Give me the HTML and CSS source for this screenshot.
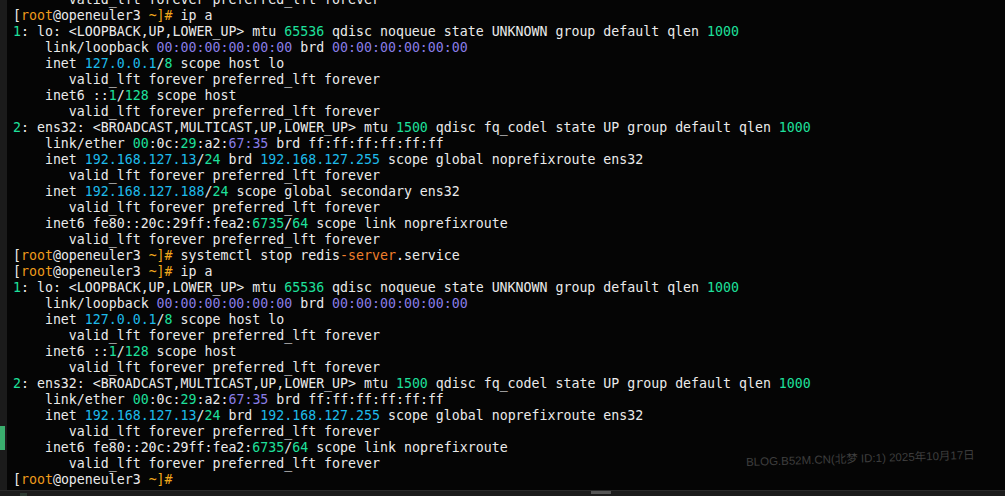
FILE: index.html
```html
<!DOCTYPE html>
<html>
<head>
<meta charset="utf-8">
<link rel="stylesheet" href="styles.css">
</head>
<body>
<div class="window">
  <div class="main">
    <div class="gutter"><div class="marker"></div></div>
    <div class="term">
      <div class="lines">
<div class="ln">       valid_lft forever preferred_lft forever</div>
<div class="ln">[<span class="o">root</span>@openeuler3 <span class="y">~]#</span> ip a</div>
<div class="ln"><span class="g">1</span>: lo: &lt;LOOPBACK,UP,LOWER_UP&gt; mtu <span class="g">65536</span> qdisc noqueue state UNKNOWN group default qlen <span class="g">1000</span></div>
<div class="ln">    link/loopback <span class="p">00:00:00:00:00:00</span> brd <span class="p">00:00:00:00:00:00</span></div>
<div class="ln">    inet <span class="c">127.0.0.1</span>/<span class="g">8</span> scope host lo</div>
<div class="ln">       valid_lft forever preferred_lft forever</div>
<div class="ln">    inet6 ::<span class="g">1</span>/<span class="g">128</span> scope host</div>
<div class="ln">       valid_lft forever preferred_lft forever</div>
<div class="ln"><span class="g">2</span>: ens32: &lt;BROADCAST,MULTICAST,UP,LOWER_UP&gt; mtu <span class="g">1500</span> qdisc fq_codel state UP group default qlen <span class="g">1000</span></div>
<div class="ln">    link/ether <span class="g">00</span>:0c:<span class="g">29</span>:a2:<span class="p">67:35</span> brd ff:ff:ff:ff:ff:ff</div>
<div class="ln">    inet <span class="c">192.168.127.13</span>/<span class="g">24</span> brd <span class="c">192.168.127.255</span> scope global noprefixroute ens32</div>
<div class="ln">       valid_lft forever preferred_lft forever</div>
<div class="ln">    inet <span class="c">192.168.127.188</span>/<span class="g">24</span> scope global secondary ens32</div>
<div class="ln">       valid_lft forever preferred_lft forever</div>
<div class="ln">    inet6 fe80::20c:29ff:fea2:<span class="g">6735</span>/<span class="g">64</span> scope link noprefixroute</div>
<div class="ln">       valid_lft forever preferred_lft forever</div>
<div class="ln">[<span class="o">root</span>@openeuler3 <span class="y">~]#</span> systemctl stop redis<span class="o2">-server</span>.service</div>
<div class="ln">[<span class="o">root</span>@openeuler3 <span class="y">~]#</span> ip a</div>
<div class="ln"><span class="g">1</span>: lo: &lt;LOOPBACK,UP,LOWER_UP&gt; mtu <span class="g">65536</span> qdisc noqueue state UNKNOWN group default qlen <span class="g">1000</span></div>
<div class="ln">    link/loopback <span class="p">00:00:00:00:00:00</span> brd <span class="p">00:00:00:00:00:00</span></div>
<div class="ln">    inet <span class="c">127.0.0.1</span>/<span class="g">8</span> scope host lo</div>
<div class="ln">       valid_lft forever preferred_lft forever</div>
<div class="ln">    inet6 ::<span class="g">1</span>/<span class="g">128</span> scope host</div>
<div class="ln">       valid_lft forever preferred_lft forever</div>
<div class="ln"><span class="g">2</span>: ens32: &lt;BROADCAST,MULTICAST,UP,LOWER_UP&gt; mtu <span class="g">1500</span> qdisc fq_codel state UP group default qlen <span class="g">1000</span></div>
<div class="ln">    link/ether <span class="g">00</span>:0c:<span class="g">29</span>:a2:<span class="p">67:35</span> brd ff:ff:ff:ff:ff:ff</div>
<div class="ln">    inet <span class="c">192.168.127.13</span>/<span class="g">24</span> brd <span class="c">192.168.127.255</span> scope global noprefixroute ens32</div>
<div class="ln">       valid_lft forever preferred_lft forever</div>
<div class="ln">    inet6 fe80::20c:29ff:fea2:<span class="g">6735</span>/<span class="g">64</span> scope link noprefixroute</div>
<div class="ln">       valid_lft forever preferred_lft forever</div>
<div class="ln">[<span class="o">root</span>@openeuler3 <span class="y">~]#</span></div>
      </div>
      <div class="watermark">BLOG.B52M.CN(北梦 ID:1) 2025年10月17日</div>
    </div>
  </div>
  <div class="bottombar">
    <div class="tick"></div>
    <div class="thumb"></div>
  </div>
</div>
</body>
</html>
```

FILE: styles.css
```css
html, body {
  margin: 0;
  padding: 0;
  background: #050505;
  overflow: hidden;
}
.window {
  width: 1005px;
  height: 496px;
  display: flex;
  flex-direction: column;
}
.main {
  display: flex;
  height: 490px;
}
.gutter {
  width: 7px;
  background: #1b1b1b;
  flex: none;
  padding-top: 426px;
  box-sizing: border-box;
}
.marker {
  width: 5px;
  height: 24px;
  background: #3aae6e;
}
.term {
  flex: 1;
  position: relative;
  overflow: hidden;
  padding-left: 6px;
  background: #050505;
}
.lines {
  margin-top: -8px;
  font-family: "DejaVu Sans Mono", "Liberation Mono", monospace;
  font-size: 13.25px;
  line-height: 16px;
  color: #ebebeb;
}
.ln {
  height: 16px;
  white-space: pre;
}
.g { color: #1ee09c; }
.c { color: #1ebbea; }
.p { color: #8a7ee8; }
.o { color: #f09c1c; }
.y { color: #f0a81c; }
.o2 { color: #f07f2c; }
.watermark {
  position: absolute;
  left: 739px;
  top: 453px;
  font-family: "Liberation Sans", "Noto Sans CJK SC", sans-serif;
  font-size: 11.5px;
  color: #3e3e3e;
  transform: rotate(-1.8deg);
  transform-origin: left center;
  white-space: nowrap;
}
.bottombar {
  height: 6px;
  background: #1c1c1c;
  border-top: 1px solid #2a2a2a;
  box-sizing: border-box;
  display: flex;
  position: relative;
}
.tick {
  width: 7px;
  height: 3px;
  margin-left: 20px;
  margin-top: 2px;
  background: #2c3a32;
}
.thumb {
  width: 20px;
  height: 3px;
  margin-left: 564px;
  background: #555555;
}
```
